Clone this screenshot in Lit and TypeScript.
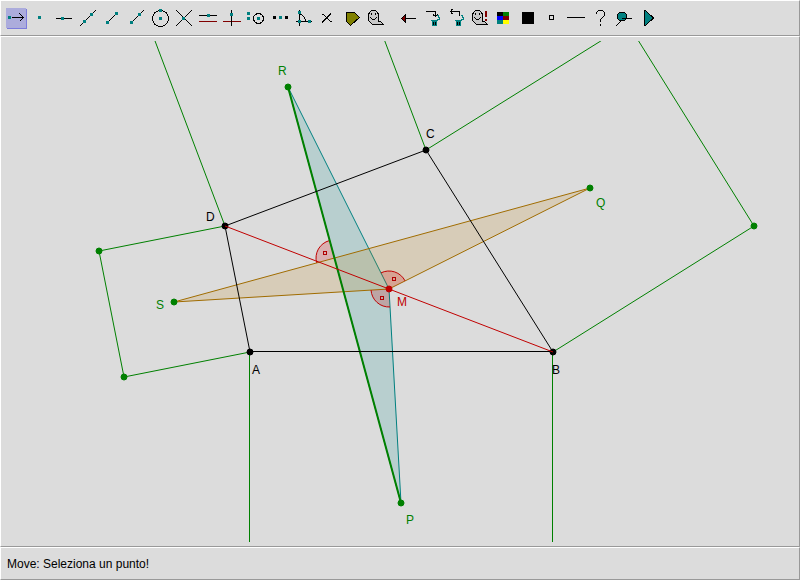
import { LitElement, html, svg, css } from "lit";
import { customElement, state } from "lit/decorators.js";
import { classMap } from "lit/directives/class-map.js";

/* Teal construction point, 3x3 pixels, given by its top-left corner. */
const dot = (x: number, y: number, kind = "t") =>
  svg`<rect class=${kind} x=${x} y=${y} width="3" height="3"></rect>`;
const line = (d: string, kind = "l") => svg`<path class=${kind} d=${d}></path>`;

const ghost = svg`
  <path class="ghost" d="M4.5 14.5V8.5L5.5 6.5L7.5 4.5H11.5L13.5 6.5L14.5 8.5V15.5H16.5L19.5 18.5H8.5Z"></path>
  <path class="l" d="M7.5 7V9M11.5 7V9M6.5 11.5L8.5 13.5H10.5L12.5 11.5"></path>`;

const trash = svg`
  <path class="t" d="M12 15H17V20H12ZM11 14H18V15H11Z"></path>
  <path class="tl" d="M17 9.5H18.5V11.5H19.5V13.5H17.5V15"></path>
  <path class="l" d="M13.5 16V19M15.5 16V19"></path>`;

interface Tool {
  name: string;
  icon: unknown;
}

const constructionTools: Tool[] = [
  { name: "Move", icon: svg`<rect class="shade" x="3" y="3" width="20" height="20"></rect><rect class="lit" x="2" y="2" width="20" height="20"></rect>${line("M8 11.5H20M15.5 7.5L19.5 11.5L15.5 15.5")}${dot(4, 10)}` },
  { name: "Point", icon: dot(10, 10) },
  { name: "Point on object", icon: svg`${line("M4 12.5H20")}${dot(9, 11)}` },
  { name: "Line", icon: svg`${line("M4 20L20 4")}${dot(7, 14)}${dot(14, 7)}` },
  { name: "Segment", icon: svg`${line("M7 17L17 7")}${dot(6, 15)}${dot(15, 6)}` },
  { name: "Ray", icon: svg`${line("M7 17L20 4")}${dot(6, 15)}${dot(14, 7)}` },
  { name: "Circle", icon: svg`<circle class="l" cx="12.5" cy="12.5" r="8"></circle>${dot(11, 11)}${dot(11, 3)}` },
  { name: "Intersection", icon: svg`${line("M4 4L20 20M4 20L20 4")}${dot(10, 11)}` },
  { name: "Parallel", icon: svg`${line("M3 9.5H21")}${line("M3 15.5H21", "r")}${dot(11, 8)}` },
  { name: "Perpendicular", icon: svg`${line("M3 15.5H21", "r")}${line("M11.5 4V20")}${dot(10, 7)}` },
  { name: "Compass", icon: svg`<circle class="l" cx="14.5" cy="12.5" r="5"></circle>${dot(3, 6)}${dot(3, 11)}${dot(13, 11)}` },
  { name: "Midpoint", icon: svg`${dot(5, 10, "k")}${dot(11, 10)}${dot(17, 10, "k")}` },
  { name: "Angle", icon: svg`${line("M7.5 4V20M4 15.5H20M8 8.5H9.5L12.5 11.5L13.5 15")}${dot(6, 5)}${dot(6, 14)}${dot(16, 14)}` },
  { name: "Fixed angle", icon: line("M6 8.5H7.5L14.5 15.5H16M6 16.5L15 7.5") },
  { name: "Area", icon: svg`<path class="olive" d="M6.5 6.5H14.5L19.5 11.5L10.5 19.5L6.5 15.5Z"></path>` },
  { name: "Hide", icon: ghost },
];

const editTools: Tool[] = [
  { name: "Undo", icon: svg`${line("M9 12.5H20")}<path class="brick" d="M5.5 12.5L9.5 8.5V16.5Z"></path>` },
  { name: "Delete later objects", icon: svg`${line("M6 5.5H15.5V11M13 8.5L15.5 10.5L18 8.5")}${trash}` },
  { name: "Delete objects", icon: svg`${line("M6 5.5H15.5V9.5M8.5 3L6.5 5.5L8.5 8")}${trash}` },
  { name: "Show hidden", icon: svg`${ghost}<path class="b" d="M17 5H19V11H17ZM17 13H19V15H17Z"></path>` },
  { name: "Colour", icon: svg`<path class="k" d="M5 6H11V10H5Z"></path><path class="pg" d="M11 6H17V10H11Z"></path><path class="pb" d="M5 10H11V14H5Z"></path><path class="b" d="M11 10H17V14H11Z"></path><path class="t" d="M5 14H11V18H5Z"></path><path class="py" d="M11 14H17V18H11Z"></path>` },
  { name: "Thickness", icon: svg`<rect class="k" x="6" y="6" width="12" height="12"></rect>` },
  { name: "Point shape", icon: svg`<rect class="l" x="9.5" y="9.5" width="4" height="4"></rect>` },
  { name: "Line style", icon: line("M3 11.5H21") },
  { name: "Help", icon: line("M8.5 8V6.5L10.5 4.5H14.5L16.5 6.5V9.5L12.5 13.5V16M12.5 18V20") },
  { name: "Comment", icon: svg`<circle class="ball" cx="10" cy="10.5" r="4.5"></circle>${line("M10 12.5H20M4 20L10 14")}` },
  { name: "Replay", icon: svg`<path class="ball" d="M8.5 4.5H9.5L17.5 12L9.5 19.5H8.5Z"></path>` },
];

type Pt = [number, number];
const P: Record<string, Pt> = {
  A: [250, 352], B: [553, 352], C: [426, 150], D: [225, 226],
  M: [389, 289], P: [401, 503], Q: [590, 188], R: [288, 87], S: [174, 302],
  E: [99, 251], F: [124, 377], G: [754, 226], H: [628, 24],
  DUp: [149, 25], CUp: [350, -51], X: [334, 258],
};

const seg = (a: Pt, b: Pt, kind: string) =>
  svg`<line class=${kind} x1=${a[0]} y1=${a[1]} x2=${b[0]} y2=${b[1]}></line>`;
const tri = (a: Pt, b: Pt, c: Pt, kind: string) =>
  svg`<polygon class=${kind} points=${[a, b, c].map((p) => p.join(",")).join(" ")}></polygon>`;
const knob = (p: Pt, kind: string) =>
  svg`<circle class=${kind} cx=${p[0]} cy=${p[1]} r="3"></circle>`;

/* Right-angle mark at v: a sector opening from the direction of a to that of b. */
const rightAngle = (v: Pt, a: Pt, b: Pt) => {
  const r = 18;
  const dir = (p: Pt): Pt => {
    const dx = p[0] - v[0];
    const dy = p[1] - v[1];
    const n = Math.hypot(dx, dy);
    return [dx / n, dy / n];
  };
  const [ax, ay] = dir(a);
  const [bx, by] = dir(b);
  const [cx, cy] = v;
  const arc = `${cx + ax * r} ${cy + ay * r}A${r} ${r} 0 0 1 ${cx + bx * r} ${cy + by * r}`;
  const mx = Math.round(cx + (ax + bx) * 8);
  const my = Math.round(cy + (ay + by) * 8);
  return svg`<path class="sector" d=${`M${cx} ${cy}L${arc}Z`}></path>
    <path class="arc" d=${`M${arc}`}></path>
    <rect class="mark" x=${mx - 0.5} y=${my - 0.5} width="3" height="3"></rect>`;
};

const labels: [string, number, number, string][] = [
  ["A", 252, 374, "black"], ["B", 552, 374, "black"], ["C", 426, 138, "black"], ["D", 206, 221, "black"],
  ["P", 406, 524, "green"], ["Q", 596, 207, "green"], ["R", 278, 75, "green"], ["S", 156, 309, "green"],
  ["M", 397, 306, "red"],
];

@customElement("geo-toolbar")
export class GeoToolbar extends LitElement {
  @state() private selected = "Move";

  static styles = css`
    :host { display: flex; gap: 8px; }
    .group { display: flex; }
    button { width: 24px; height: 24px; padding: 0; border: 0; background: none; display: block; }
    svg { display: block; width: 24px; height: 24px; shape-rendering: crispEdges; }
    .t { fill: #008080; }
    .tl { fill: none; stroke: #008080; }
    .k { fill: #000; }
    .b { fill: #800000; }
    .l { fill: none; stroke: #000; }
    .r { fill: none; stroke: #800000; }
    .lit { fill: #acacdc; }
    .shade { fill: #7c7cdc; }
    .ghost { fill: #c8c8c8; stroke: #000; }
    .olive { fill: #808000; stroke: #000; }
    .brick { fill: #800000; stroke: #000; }
    .ball { fill: #008080; stroke: #000; }
    .pg { fill: #008000; }
    .pb { fill: #0000ff; }
    .py { fill: #ffff00; }
  `;

  private tool(t: Tool) {
    return html`<button
      type="button"
      aria-label=${t.name}
      aria-pressed=${this.selected === t.name ? "true" : "false"}
      class=${classMap({ on: this.selected === t.name })}
      @click=${() => { this.selected = t.name; }}
    ><svg viewBox="0 0 24 24" aria-hidden="true">${t.icon}</svg></button>`;
  }

  render() {
    return html`
      <div class="group">${constructionTools.map((t) => this.tool(t))}</div>
      <div class="group">${editTools.map((t) => this.tool(t))}</div>`;
  }
}

@customElement("geo-figure")
export class GeoFigure extends LitElement {
  static styles = css`
    :host { display: block; min-height: 0; }
    svg { display: block; width: 100%; height: 100%; }
    line, .arc { fill: none; stroke-width: 1; }
    .black { stroke: #000; fill: #000; }
    .green { stroke: #008000; fill: #008000; }
    .red { stroke: #c00000; fill: #c00000; }
    .crisp { shape-rendering: crispEdges; }
    .bold { stroke-width: 2; }
    .teal { fill: rgba(0, 140, 140, 0.16); stroke: #008080; }
    .tan { fill: rgba(192, 125, 0, 0.16); stroke: #a06c00; }
    .sector { fill: rgba(208, 0, 0, 0.2); }
    .arc { stroke: #c00000; }
    .mark { fill: none; stroke: #b00000; shape-rendering: crispEdges; }
    text { font: 12px "Liberation Sans", Arial, sans-serif; }
    text.black, text.green, text.red { stroke: none; }
  `;

  render() {
    const { A, B, C, D, M, Q, R, S, E, F, G, H, DUp, CUp, X } = P;
    return html`<svg viewBox="5 41 790 501" role="img" aria-label="Quadrilateral ABCD with squares on its sides">
      ${tri(R, M, P.P, "teal")}
      ${tri(S, M, Q, "tan")}
      ${rightAngle(M, R, Q)} ${rightAngle(M, P.P, S)} ${rightAngle(X, S, R)}
      ${seg(D, DUp, "green")} ${seg(C, CUp, "green")} ${seg(C, H, "green")} ${seg(H, G, "green")} ${seg(G, B, "green")}
      ${seg(D, E, "green")} ${seg(E, F, "green")} ${seg(F, A, "green")}
      ${seg([249.5, 352], [249.5, 655], "green crisp")} ${seg([552.5, 352], [552.5, 655], "green crisp")}
      ${seg(R, P.P, "green bold")}
      ${seg([250, 351.5], [553, 351.5], "black crisp")} ${seg(B, C, "black")} ${seg(C, D, "black")} ${seg(D, A, "black")}
      ${[A, B, C, D].map((p) => knob(p, "black"))}
      ${seg(D, B, "red")}
      ${[P.P, Q, R, S, E, F, G].map((p) => knob(p, "green"))}
      ${knob(M, "red")}
      ${labels.map(([t, x, y, kind]) => svg`<text class=${kind} x=${x} y=${y}>${t}</text>`)}
    </svg>`;
  }
}

@customElement("app-root")
export class AppRoot extends LitElement {
  static styles = css`
    :host {
      display: flex;
      flex-direction: column;
      height: 100vh;
      background: #dcdcdc;
      color: #000;
      font: 12px/16px "Liberation Sans", Arial, sans-serif;
    }
    .panel {
      box-sizing: border-box;
      border: 1px solid;
      border-color: #fff #999 #999 #fff;
    }
    .tools { padding: 5px 3px; }
    .canvas { flex: 1; min-height: 0; padding: 4px; display: flex; }
    geo-figure { flex: 1; }
    .status { padding: 8px 6px 7px; }
  `;

  render() {
    return html`
      <header class="panel tools"><geo-toolbar role="toolbar" aria-label="Tools"></geo-toolbar></header>
      <main class="panel canvas"><geo-figure></geo-figure></main>
      <footer class="panel status" role="status">Move: Seleziona un punto!</footer>`;
  }
}
